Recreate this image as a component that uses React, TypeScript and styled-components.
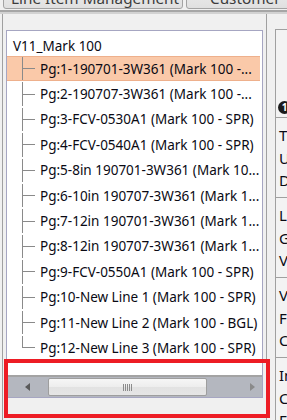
import React from 'react';
import styled, { createGlobalStyle } from 'styled-components';

const GlobalStyle = createGlobalStyle`
  html, body {
    margin: 0;
    padding: 0;
    background: #f0f0f0;
    overflow: hidden;
  }
  body {
    font-family: 'Noto Sans', 'Liberation Sans', sans-serif;
    color: #0a0a14;
  }
`;

const Page = styled.div`
  position: relative;
  width: 287px;
  height: 420px;
  overflow: hidden;
  background: #f0f0f0;
`;

const TabStrip = styled.div`
  display: flex;
  gap: 3px;
  height: 9px;
  padding-left: 3px;
`;

const Tab = styled.div<{ $width: number; $indent: number }>`
  flex-shrink: 0;
  box-sizing: border-box;
  width: ${(p) => p.$width}px;
  height: 22px;
  margin-top: -13px;
  padding-left: ${(p) => p.$indent}px;
  background: linear-gradient(#ececec, #e0e0e0);
  border: 1px solid #a3a3a3;
  border-radius: 0 0 3px 3px;
  font-size: 15.3px;
  line-height: 20px;
  color: #3c3c3c;
  white-space: nowrap;
  overflow: hidden;
`;

const TabLine = styled.div`
  margin-top: 1px;
  height: 2px;
  background: #a6a6a6;
`;

const Body = styled.div`
  display: flex;
  align-items: flex-start;
  gap: 8px;
  padding-left: 2px;
  border-top: 2px solid #d2d2d2;
`;

const GroupBox = styled.div`
  flex-shrink: 0;
  width: 265px;
  height: 420px;
  padding: 16px 3px 0;
  box-sizing: border-box;
  border-left: 1px solid #a0a0a0;
  border-right: 1px solid #a0a0a0;
`;

const TreeBox = styled.div`
  display: flex;
  flex-direction: column;
  height: 368px;
  box-sizing: border-box;
  border: 1px solid #a6a6c2;
  background: #fff;
`;

const TreeContent = styled.div`
  flex: 1;
  font-size: 13.5px;
`;

const RootLabel = styled.div`
  height: 25px;
  box-sizing: border-box;
  padding: 5px 0 0 6px;
  line-height: 20px;
`;

const Row = styled.div<{ $selected?: boolean }>`
  display: flex;
  align-items: center;
  height: 25.4px;
  box-sizing: border-box;
  margin-right: 2px;
  background: ${(p) => (p.$selected ? '#fac9a9' : 'transparent')};
  border-top: 1px solid ${(p) => (p.$selected ? '#eeb08c' : 'transparent')};
  border-bottom: 1px solid ${(p) => (p.$selected ? '#eeb08c' : 'transparent')};
  white-space: nowrap;
  overflow: hidden;
`;

const Connector = styled.span<{ $last?: boolean }>`
  flex-shrink: 0;
  align-self: stretch;
  width: 13px;
  margin: -1px 0 -1px 15px;
  background:
    linear-gradient(#8a8a8a, #8a8a8a) left top / 1px ${(p) => (p.$last ? '50%' : '100%')} no-repeat,
    linear-gradient(#8a8a8a, #8a8a8a) left center / 13px 1px no-repeat;
`;

const RowText = styled.span`
  margin-left: 5px;
  line-height: 20px;
`;

const ScrollBar = styled.div`
  display: flex;
  height: 20px;
  border-top: 2px solid #a3a3a3;
  background: #b4b7bf;
`;

const ArrowButton = styled.div<{ $width: number }>`
  display: flex;
  align-items: center;
  justify-content: center;
  width: ${(p) => p.$width}px;
  flex-shrink: 0;
`;

const Thumb = styled.div`
  display: flex;
  align-items: center;
  justify-content: center;
  width: 159px;
  margin: 1px 0 1px 1px;
  box-sizing: border-box;
  border: 1px solid #9e9e9e;
  border-radius: 2px;
  background: linear-gradient(#f6f6f6 0%, #ededed 50%, #e2e2e2 51%, #e6e6e6 100%);
`;

const Grip = styled.div`
  width: 9px;
  height: 7px;
  background: repeating-linear-gradient(90deg, #8c8c8c 0 1px, transparent 1px 2px);
`;

const Track = styled.div`
  flex: 1;
`;

const RightPanel = styled.div`
  flex-shrink: 0;
  width: 160px;
  margin-top: 15px;
  border-left: 1px solid #a0a0a0;
  border-top: 1px solid #a0a0a0;
  background: #f3f3f3;
  font-size: 15px;
`;

const PanelHead = styled.div`
  height: 87px;
  display: flex;
  align-items: flex-end;
  padding: 0 0 3px 2px;
  box-sizing: border-box;
`;

const Badge = styled.div`
  width: 13px;
  height: 13px;
  border-radius: 50%;
  background: #1b1b1b;
  color: #fff;
  font-size: 10px;
  font-weight: 700;
  line-height: 13px;
  text-align: center;
`;

const FieldGroup = styled.div`
  height: 80px;
  box-sizing: border-box;
  padding: 6px 0 0 3px;
  border-top: 1px solid #a0a0a0;
`;

const Field = styled.div`
  height: 22.5px;
  line-height: 22.5px;
  white-space: nowrap;
`;

const Highlight = styled.div`
  position: absolute;
  left: 4px;
  top: 359px;
  width: 266px;
  height: 59px;
  box-sizing: border-box;
  border: 4px solid #ed1c24;
  pointer-events: none;
`;

const pages = [
  'Pg:1-190701-3W361 (Mark 100 -...',
  'Pg:2-190707-3W361 (Mark 100 -...',
  'Pg:3-FCV-0530A1 (Mark 100 - SPR)',
  'Pg:4-FCV-0540A1 (Mark 100 - SPR)',
  'Pg:5-8in 190701-3W361 (Mark 10...',
  'Pg:6-10in 190707-3W361 (Mark 1...',
  'Pg:7-12in 190701-3W361 (Mark 1...',
  'Pg:8-12in 190707-3W361 (Mark 1...',
  'Pg:9-FCV-0550A1 (Mark 100 - SPR)',
  'Pg:10-New Line 1 (Mark 100 - SPR)',
  'Pg:11-New Line 2 (Mark 100 - BGL)',
  'Pg:12-New Line 3 (Mark 100 - SPR)',
];

const fieldGroups = [
  ['T', 'U', 'D'],
  ['L', 'G', 'V'],
  ['V', 'F', 'C'],
  ['In', 'C', 'F'],
];

function App() {
  return (
    <Page>
      <GlobalStyle />
      <TabStrip>
        <Tab $width={180} $indent={7}>Line Item Management</Tab>
        <Tab $width={120} $indent={23}>Customer</Tab>
      </TabStrip>
      <TabLine />
      <Body>
        <GroupBox>
          <TreeBox>
            <TreeContent>
              <RootLabel>V11_Mark 100</RootLabel>
              {pages.map((label, i) => (
                <Row key={label} $selected={i === 0}>
                  <Connector $last={i === pages.length - 1} />
                  <RowText>{label}</RowText>
                </Row>
              ))}
            </TreeContent>
            <ScrollBar>
              <ArrowButton $width={40}>
                <svg width="5" height="8" viewBox="0 0 5 8">
                  <path d="M5 0 L0 4 L5 8 Z" fill="#5a5a5a" />
                </svg>
              </ArrowButton>
              <Thumb>
                <Grip />
              </Thumb>
              <Track />
              <ArrowButton $width={19}>
                <svg width="5" height="8" viewBox="0 0 5 8">
                  <path d="M0 0 L5 4 L0 8 Z" fill="#8a8a8a" />
                </svg>
              </ArrowButton>
            </ScrollBar>
          </TreeBox>
        </GroupBox>
        <RightPanel>
          <PanelHead>
            <Badge>1</Badge>
          </PanelHead>
          {fieldGroups.map((group, i) => (
            <FieldGroup key={i}>
              {group.map((f, j) => (
                <Field key={j}>{f}</Field>
              ))}
            </FieldGroup>
          ))}
        </RightPanel>
      </Body>
      <Highlight />
    </Page>
  );
}

export default App;
